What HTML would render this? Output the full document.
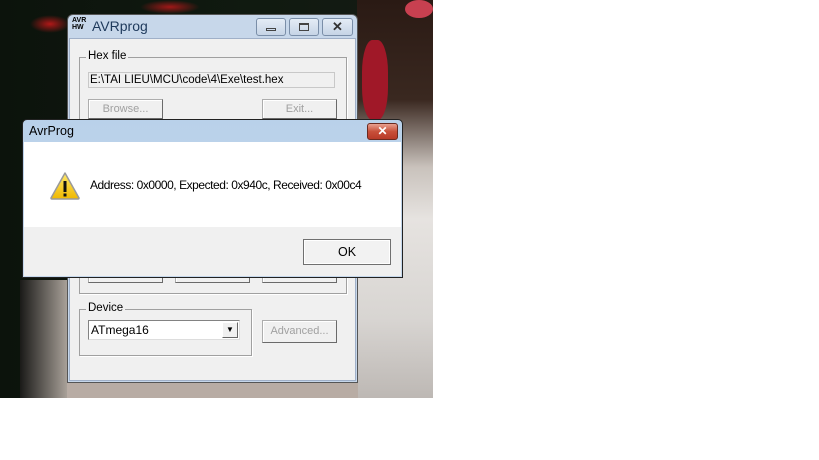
<!DOCTYPE html>
<html><head><meta charset="utf-8"><style>
*{margin:0;padding:0;box-sizing:border-box}
body{width:819px;height:460px;background:#fff;position:relative;overflow:hidden;font-family:"Liberation Sans",sans-serif;font-size:11px;color:#000}
.a{position:absolute}
.bg{left:0;top:0;width:433px;height:398px;background:linear-gradient(90deg,#0c130c 0,#101a10 60%,#151a14 100%)}
.btn{position:absolute;border:1px solid #adadad;border-right-color:#6a6a6a;border-bottom-color:#6a6a6a;background:#f0f0f0;color:#a0a0a0;text-align:center;font-size:11px;box-shadow:inset 1px 1px #fff}
.grp{position:absolute;border:1px solid #a0a0a0;box-shadow:1px 1px #fff}
.gl{position:absolute;background:#f0f0f0;padding:0 2px;font-size:11.5px;top:-8px;left:6px}
</style></head><body>
<div class="a bg"></div>
<div class="a" style="left:30px;top:15px;width:40px;height:18px;background:radial-gradient(#b01818,transparent 70%)"></div>
<div class="a" style="left:140px;top:0;width:60px;height:14px;background:radial-gradient(#a01818,transparent 70%)"></div>
<div class="a" style="left:357px;top:0;width:76px;height:398px;background:linear-gradient(180deg,#2a1a14 0,#3a2820 25%,#c9c2bc 42%,#e6e3e0 55%,#d8d5d2 80%,#bdb8b4 100%)"></div>
<div class="a" style="left:362px;top:40px;width:26px;height:80px;background:#a01828;border-radius:40%"></div>
<div class="a" style="left:405px;top:0;width:28px;height:18px;background:#c84050;border-radius:50%"></div>
<div class="a" style="left:20px;top:280px;width:47px;height:118px;background:linear-gradient(90deg,#1a1a18,#a8a098)"></div>
<div class="a" style="left:67px;top:382px;width:291px;height:16px;background:#b8aca4"></div>

<div class="a" style="left:67px;top:14px;width:291px;height:369px;border:1px solid #555;border-radius:6px 6px 0 0;background:#c7d7ea"></div>
<div class="a" style="left:72px;top:17px;font-size:7px;font-weight:bold;line-height:7px">AVR<br>HW</div>
<div class="a" style="left:92px;top:18px;font-size:14px;color:#1e395b">AVRprog</div>
<div class="a" style="left:256px;top:18px;width:30px;height:18px;border:1px solid #7a8ea8;border-radius:3px;background:linear-gradient(#e4ecf6,#c6d4e6)"></div>
<div class="a" style="left:266px;top:28px;width:10px;height:3px;border:1px solid #444"></div>
<div class="a" style="left:289px;top:18px;width:30px;height:18px;border:1px solid #7a8ea8;border-radius:3px;background:linear-gradient(#e4ecf6,#c6d4e6)"></div>
<div class="a" style="left:299px;top:23px;width:10px;height:8px;border:1px solid #444;border-top-width:2px"></div>
<div class="a" style="left:322px;top:18px;width:31px;height:18px;border:1px solid #7a8ea8;border-radius:3px;background:linear-gradient(#e4ecf6,#c6d4e6);text-align:center;font-size:13px;line-height:16px;color:#333;font-weight:bold">✕</div>
<div class="a" style="left:69px;top:38px;width:287px;height:343px;background:#f0f0f0;border:1px solid #a0b0c8"></div>

<div class="grp" style="left:79px;top:57px;width:268px;height:237px"><span class="gl">Hex file</span></div>
<div class="a" style="left:88px;top:72px;width:247px;height:16px;border:1px solid #c8c8c8;background:#f0f0f0;font-size:11.5px;padding-left:1px;line-height:14px">E:\TAI LIEU\MCU\code\4\Exe\test.hex</div>
<div class="btn" style="left:88px;top:99px;width:75px;height:20px;line-height:18px">Browse...</div>
<div class="btn" style="left:262px;top:99px;width:75px;height:20px;line-height:18px">Exit...</div>
<div class="btn" style="left:88px;top:270px;width:75px;height:13px"></div>
<div class="btn" style="left:175px;top:270px;width:75px;height:13px"></div>
<div class="btn" style="left:262px;top:270px;width:75px;height:13px"></div>

<div class="grp" style="left:79px;top:309px;width:173px;height:47px"><span class="gl">Device</span></div>
<div class="a" style="left:88px;top:320px;width:152px;height:20px;border:1px solid #828282;border-right-color:#ddd;border-bottom-color:#ddd;background:#fff;font-size:12px;line-height:18px;padding-left:2px">ATmega16</div>
<div class="a" style="left:222px;top:322px;width:16px;height:16px;background:#f0f0f0;border:1px solid #fff;border-right-color:#666;border-bottom-color:#666;text-align:center;font-size:8px;line-height:14px">▼</div>
<div class="btn" style="left:262px;top:320px;width:75px;height:23px;line-height:21px">Advanced...</div>

<div class="a" style="left:22px;top:119px;width:381px;height:159px;border:1px solid #222;border-radius:5px 5px 0 0;background:linear-gradient(#b9d1ea,#c6d8ec)"></div>
<div class="a" style="left:29px;top:124px;font-size:12.5px;color:#000">AvrProg</div>
<div class="a" style="left:367px;top:123px;width:31px;height:17px;border:1px solid #6b2a20;border-radius:3px;background:linear-gradient(#e8a090,#c8503a 50%,#b83a28);color:#fff;text-align:center;font-weight:bold;font-size:12px;line-height:15px">✕</div>
<div class="a" style="left:24px;top:142px;width:377px;height:134px;background:#f0f0f0"></div>
<div class="a" style="left:24px;top:142px;width:377px;height:85px;background:#fff"></div>
<svg class="a" style="left:49px;top:171px" width="32" height="30" viewBox="0 0 32 30">
<defs><linearGradient id="g" x1="0" y1="0" x2="0" y2="1"><stop offset="0" stop-color="#ffe96a"/><stop offset="1" stop-color="#f0b800"/></linearGradient></defs>
<path d="M16 2 L30 27 Q30 28 29 28 L3 28 Q2 28 2 27 Z" fill="url(#g)" stroke="#9a9a9a" stroke-width="1.5" stroke-linejoin="round"/>
<rect x="14.5" y="10" width="3" height="11" fill="#111"/><rect x="14.5" y="22.5" width="3" height="3" fill="#111"/>
</svg>
<div class="a" style="left:90px;top:178px;font-size:12px;letter-spacing:-0.45px;white-space:nowrap">Address: 0x0000, Expected: 0x940c, Received: 0x00c4</div>
<div class="a" style="left:303px;top:239px;width:88px;height:26px;border:1px solid #707070;box-shadow:inset 0 0 0 1px #fff;background:#f2f2f2;text-align:center;line-height:24px;font-size:12.5px">OK</div>
</body></html>
